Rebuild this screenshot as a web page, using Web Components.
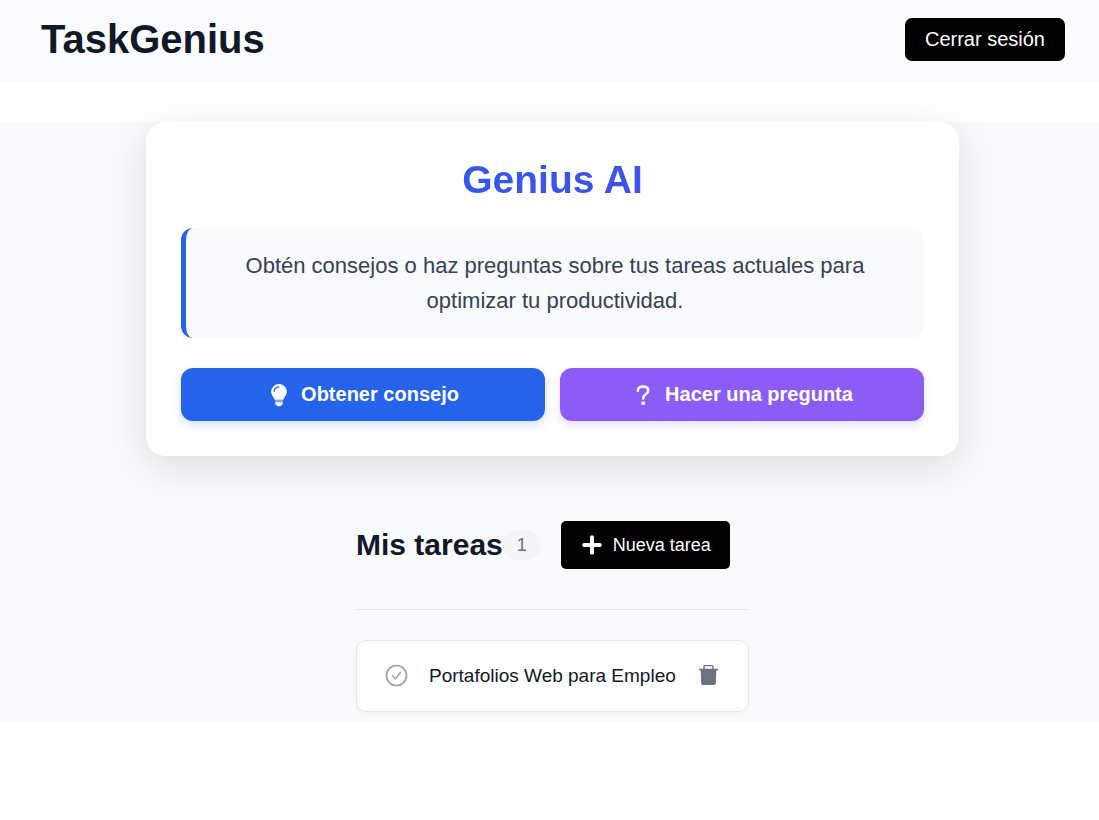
<!DOCTYPE html>
<html lang="es">
<head>
<meta charset="utf-8">
<meta name="viewport" content="width=device-width, initial-scale=1">
<title>TaskGenius</title>
<style>
  body { margin: 0; background: #fff; color: #111827; font-family: "Liberation Sans", Arial, sans-serif; }
</style>
</head>
<body>
<task-genius-app></task-genius-app>

<script>
const define = (name, html) => {
  const template = document.createElement('template');
  template.innerHTML = html;
  customElements.define(name, class extends HTMLElement {
    constructor() {
      super();
      this.attachShadow({ mode: 'open' }).append(template.content.cloneNode(true));
    }
  });
};

define('app-header', `
  <style>
    :host { display: block; background: #fafbfd; }
    header { display: flex; justify-content: space-between; align-items: center; padding: 16px 34px 19px 41px; }
    h1 { margin: 0; font-size: 40px; line-height: 47px; font-weight: 700; }
    button { height: 43px; margin: 0; padding: 0 20px; border: 0; border-radius: 7px; background: #000; color: #fff; font: 20px "Liberation Sans", Arial, sans-serif; cursor: pointer; }
  </style>
  <header>
    <h1><slot></slot></h1>
    <button type="button">Cerrar sesión</button>
  </header>`);

define('action-button', `
  <style>
    :host { display: block; flex: 1 1 0; }
    button { width: 100%; height: 53px; display: flex; align-items: center; justify-content: center; gap: 10px; margin: 0; padding: 0 20px; border: 0; border-radius: 12px; background: var(--action-color); color: #fff; font: 700 20px "Liberation Sans", Arial, sans-serif; box-shadow: 0 4px 10px var(--action-shadow); cursor: pointer; }
    ::slotted(svg) { display: block; width: 24px; height: 24px; }
  </style>
  <button type="button"><slot name="icon"></slot><slot></slot></button>`);

define('ai-panel', `
  <style>
    :host { display: block; box-sizing: border-box; width: calc(100% - 280px); max-width: 850px; padding: 35px; border-radius: 20px; background: #fff; box-shadow: 0 10px 40px rgba(0, 0, 0, .12); }
    h2 { margin: 0 0 25px; font-size: 39px; line-height: 46px; font-weight: 700; text-align: center; color: transparent; background: linear-gradient(90deg, #2563eb, #4f46e5); -webkit-background-clip: text; background-clip: text; }
    p { margin: 0 0 30px; padding: 20px 25px; border-left: 5px solid #2563eb; border-radius: 12px; background: #f9fafc; color: #374151; font-size: 22px; line-height: 35px; text-align: center; }
    .actions { display: flex; gap: 15px; }
    .tip { --action-color: #2563eb; --action-shadow: rgba(37, 99, 235, .2); }
    .ask { --action-color: #8b5cf6; --action-shadow: rgba(139, 92, 246, .2); }
  </style>
  <h2>Genius AI</h2>
  <p>Obtén consejos o haz preguntas sobre tus tareas actuales para optimizar tu productividad.</p>
  <div class="actions">
    <action-button class="tip">
      <svg slot="icon" viewBox="0 0 24 24" aria-hidden="true">
        <path fill="#fff" d="M12 1a7.800 7.800 0 0 0-7.800 7.800c0 3.400 2.600 5.100 3.500 7.900h8.600c.9-2.800 3.500-4.500 3.500-7.900A7.800 7.800 0 0 0 12 1z"/>
        <path fill="#fff" fill-opacity=".75" d="M8 17.400h8v1.200H8z"/>
        <path fill="#fff" d="M8.300 19.300h7.400v1.200c0 1-.8 1.700-1.700 1.900-.3.600-1.100.9-2 .9s-1.700-.3-2-.9c-.9-.2-1.700-.9-1.700-1.900z"/>
        <path d="M7.200 8.500a4.500 4.500 0 0 1 4.500-4.500" fill="none" stroke="#2563eb" stroke-width="1.300" stroke-linecap="round"/>
      </svg>Obtener consejo
    </action-button>
    <action-button class="ask">
      <svg slot="icon" viewBox="0 0 24 24" aria-hidden="true">
        <path d="M6.900 7.800C6.900 4.800 9 3.500 12 3.500c3.200 0 5.200 1.600 5.200 4.200 0 3.600-4.900 3.700-4.900 7.300v.6" fill="none" stroke="#fff" stroke-width="2.500" stroke-linecap="round"/>
        <circle cx="12.200" cy="20.200" r="1.900" fill="#fff"/>
      </svg>Hacer una pregunta
    </action-button>
  </div>`);

define('task-item', `
  <style>
    :host { display: flex; align-items: center; box-sizing: border-box; height: 72px; padding: 0 27px; border: 1px solid #e5e7eb; border-radius: 10px; background: #fff; box-shadow: 0 2px 4px rgba(0, 0, 0, .04); }
    button { display: flex; flex: none; margin: 0; padding: 0; border: 0; background: none; cursor: pointer; }
    svg { display: block; width: 24px; height: 24px; }
    span { flex: 1; margin: 0 20px 0 21px; font-size: 19px; line-height: 24px; white-space: nowrap; }
  </style>
  <button type="button" aria-label="Completar">
    <svg viewBox="0 0 24 24" fill="none" stroke="#9ca3af" aria-hidden="true">
      <circle cx="12.500" cy="11.500" r="10" stroke-width="1.700"/>
      <path d="M8.500 11.700l3 3.200 5-6.600" stroke-width="1.500" stroke-linecap="round" stroke-linejoin="round"/>
    </svg>
  </button>
  <span><slot></slot></span>
  <button type="button" aria-label="Eliminar">
    <svg viewBox="1 1 24 24" aria-hidden="true">
      <path d="M8 6.500V3.400c0-.5.3-.8.800-.8h7.400c.5 0 .8.300.8.800v3.100" fill="none" stroke="#6b7280" stroke-width="1.400"/>
      <path d="M3.500 5.800h18c.3 0 .5.200.5.500v.7c0 .3-.2.500-.5.500H20.300l-.5 13.100c0 .8-.7 1.400-1.500 1.400H6.700c-.8 0-1.500-.6-1.500-1.400L4.700 7.500H3.500c-.3 0-.5-.2-.5-.5v-.7c0-.3.200-.5.500-.5z" fill="#6b7280"/>
    </svg>
  </button>`);

define('task-board', `
  <style>
    :host { display: block; min-width: 393px; }
    header { display: flex; align-items: center; padding-bottom: 40px; border-bottom: 1px solid #e5e7eb; }
    h2 { margin: 0; font-size: 30px; line-height: 36px; font-weight: 700; white-space: nowrap; }
    .count { margin-right: 20px; padding: 0 14px; border-radius: 15px; background: #f3f4f6; color: #6b7280; font-size: 18px; line-height: 30px; }
    button { height: 48px; display: flex; align-items: center; gap: 10px; margin: 0; padding: 0 19px 0 20px; border: 0; border-radius: 5px; background: #000; color: #fff; font: 18px "Liberation Sans", Arial, sans-serif; white-space: nowrap; cursor: pointer; }
    svg { display: block; width: 22px; height: 22px; }
    ul { list-style: none; margin: 30px 0 0; padding: 0; }
  </style>
  <header>
    <h2>Mis tareas</h2>
    <span class="count">1</span>
    <button type="button">
      <svg viewBox="0 0 22 22" fill="none" stroke="#fff" stroke-width="4" stroke-linecap="round" aria-hidden="true"><path d="M11 3.200v15.600M3.200 11h15.600"/></svg>
      Nueva tarea
    </button>
  </header>
  <ul><li><task-item>Portafolios Web para Empleo</task-item></li></ul>`);

define('task-genius-app', `
  <style>
    :host { display: block; }
    main { display: flex; flex-direction: column; align-items: center; gap: 65px; margin-top: 40px; padding: 0 0 10px 6px; background: #f9fafc; }
  </style>
  <app-header>TaskGenius</app-header>
  <main>
    <ai-panel></ai-panel>
    <task-board></task-board>
  </main>`);
</script>
</body>
</html>
